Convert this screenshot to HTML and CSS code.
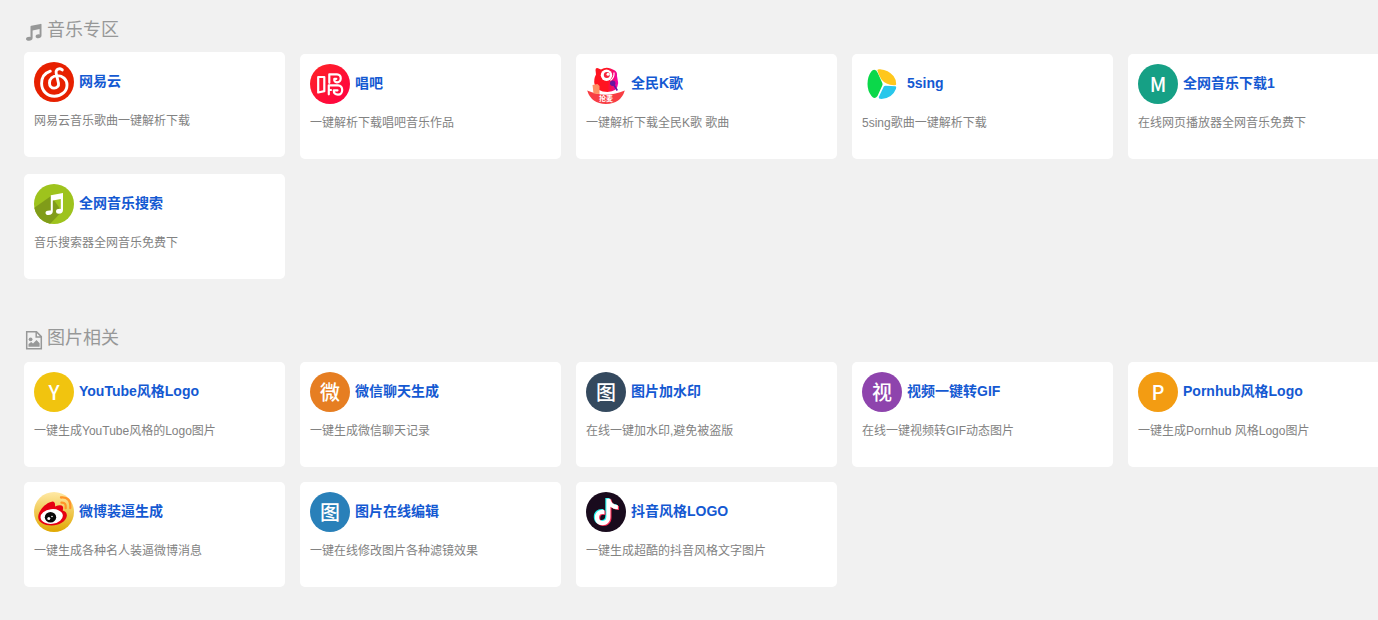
FILE: index.html
```html
<!DOCTYPE html>
<html lang="zh-CN">
<head>
  <meta charset="UTF-8">
  <meta name="viewport" content="width=device-width, initial-scale=1.0">
  <title>音乐专区 - 图片相关</title>
  <link rel="stylesheet" href="styles.css">
</head>
<body>
  <div class="main-content">
    <!-- 音乐专区 -->
    <section class="section">
      <h4 class="section-title">
        <svg class="title-icon" viewBox="0 0 18 20"><path fill="#979898" d="M5.500 4.600Q5.600 3.900 6.300 3.700L15.500 1.900Q16.500 1.700 16.500 2.600V13.600C16.500 15.300 15 16.300 13.200 16.300C11.600 16.300 10.600 15.500 10.600 14.500C10.600 13.200 12 12.300 13.600 12.300Q14.200 12.300 14.600 12.500V6.900L7.600 8.400V16C7.600 17.700 6 18.700 4 18.700C2.200 18.700 1 18 1 16.900C1 15.600 2.600 14.700 4.300 14.700Q5 14.700 5.500 14.900Z"/></svg>
        <span>音乐专区</span>
      </h4>
      <div class="cards">
        <a class="card active">
          <div class="card-head">
            <svg class="logo" viewBox="0 0 40 40">
              <circle cx="20" cy="20" r="20" fill="#e72000"/>
              <path fill="none" stroke="#fff" stroke-width="2.900" stroke-linecap="round" d="M16.300 9.200C10.500 11.200 7.600 16 7.600 21.500C7.600 28.900 13.300 34.200 20.400 34.200C27.700 34.200 33 29.300 33 22.900C33 17.300 28.500 13.600 23.500 13.600C18.700 13.600 15.500 16.800 15.500 20.900C15.500 24.100 17.500 26.100 20.100 26.100C23.100 26.100 25 23.900 24.500 21.200L22.200 11.500C21.400 8.200 23.800 6.500 25.900 6.700Q27.200 6.900 28.300 7.900"/>
            </svg>
            <strong>网易云</strong>
          </div>
          <p>网易云音乐歌曲一键解析下载</p>
        </a>
        <a class="card">
          <div class="card-head">
            <svg class="logo" viewBox="0 0 40 40">
              <defs><linearGradient id="changba" x1="0" y1="0" x2="1" y2="1"><stop offset="0" stop-color="#ff2525"/><stop offset="1" stop-color="#ff0044"/></linearGradient></defs>
              <circle cx="20" cy="20" r="20" fill="url(#changba)"/>
              <g fill="none" stroke="#fff" stroke-width="2.200" stroke-linejoin="round" stroke-linecap="round">
                <path d="M8.200 13H14.300V27.200L8.200 28.500Z"/>
                <path d="M19.300 18.800V10.300H27C32 10.300 32 18.300 27 18.300Q23.800 18 24.300 14.800H26.300"/>
                <path d="M18.800 30.300V21.300H28C33.600 21.300 33.600 30.700 28 30.700Q23.600 30.500 23.800 26.300H27.500M18.800 26H21"/>
              </g>
            </svg>
            <strong>唱吧</strong>
          </div>
          <p>一键解析下载唱吧音乐作品</p>
        </a>
        <a class="card">
          <div class="card-head">
            <svg class="logo" viewBox="0 0 40 40">
              <defs><linearGradient id="kge" x1="0" y1="0" x2="1" y2="0"><stop offset=".55" stop-color="#ff1420"/><stop offset="1" stop-color="#f000b8"/></linearGradient></defs>
              <path fill="url(#kge)" d="M9.500 6Q9.500 3.500 12 4.200L15 5.500Q19.500 2.800 24.500 4.500L28 6Q31.600 7.500 31 12L32.200 19Q31.500 27.800 21.500 28Q11 28 8.500 20Q7.500 15 10 10.500Z"/>
              <circle cx="20.500" cy="11.200" r="5.700" fill="#fff"/>
              <circle cx="20.800" cy="11" r="3" fill="#f5233a"/>
              <circle cx="22" cy="10.300" r="1.500" fill="#fff"/>
              <path d="M28 8.500Q28.500 13.500 24.500 16.500" fill="none" stroke="#fff" stroke-width="1.200"/>
              <path d="M27 19.500L31.300 26.500" stroke="#6814a0" stroke-width="1.700"/>
              <circle cx="26.700" cy="19.200" r="2.700" fill="#6814a0"/>
              <path fill="#f83d43" d="M1.200 26.500Q20 34.800 38.800 26.500Q34.800 39.800 20 40Q5.200 39.800 1.200 26.500Z"/>
              <path fill="#ff9164" d="M6.500 21L11.500 20L13.500 22V30L7.500 29.500Z"/>
              <text class="ribbon" x="20" y="37" text-anchor="middle">抢麦</text>
            </svg>
            <strong>全民K歌</strong>
          </div>
          <p>一键解析下载全民K歌 歌曲</p>
        </a>
        <a class="card">
          <div class="card-head">
            <svg class="logo" viewBox="0 0 40 40">
              <path fill="#0bd84a" d="M12.200 5.800Q14.500 5.800 15.800 9L20.300 19Q20.900 20.400 20.300 21.500L15.500 32Q12.500 36 9.500 32Q5.500 27 5.500 20Q5.500 12.500 9.300 7.600Q10.500 5.800 12.200 5.800Z"/>
              <path fill="#ffc71c" d="M15.300 6.300Q15.500 5 18 5.200Q26.500 6 31.500 12Q34.500 16 34.200 20.300Q34 21.500 32 21.200Q23.500 20.800 19.500 15.500Q16.500 11 15.300 6.300Z"/>
              <path fill="#29c7eb" d="M21.800 22.500Q22.300 21.700 23.500 21.700L33.500 22.300Q34.700 22.500 34 24.700Q30.500 34 19.500 35Q16 35 17 32.500Z"/>
            </svg>
            <strong>5sing</strong>
          </div>
          <p>5sing歌曲一键解析下载</p>
        </a>
        <a class="card">
          <div class="card-head">
            <span class="logo letter teal">M</span>
            <strong>全网音乐下载1</strong>
          </div>
          <p>在线网页播放器全网音乐免费下</p>
        </a>
        <a class="card">
          <div class="card-head">
            <svg class="logo" viewBox="0 0 40 40">
              <defs><clipPath id="round"><circle cx="20" cy="20" r="20"/></clipPath></defs>
              <circle cx="20" cy="20" r="20" fill="#9ec31d"/>
              <path clip-path="url(#round)" fill="#809c19" d="M17 12L28 27.500L14 42H0V24Z"/>
              <path fill="#fff" d="M16.800 11.200L29 9V25.800Q29 29.700 24.800 29.700Q22 29.700 22 27.200Q22.200 24.600 26.800 24.900V15L18.800 16.400V27.200Q18.500 31 14.500 31Q11.500 31 11.500 28.700Q11.700 26.100 16.800 26.500Z"/>
            </svg>
            <strong>全网音乐搜索</strong>
          </div>
          <p>音乐搜索器全网音乐免费下</p>
        </a>
      </div>
    </section>

    <!-- 图片相关 -->
    <section class="section">
      <h4 class="section-title">
        <svg class="title-icon" viewBox="0 0 18 20"><path fill="none" stroke="#979898" stroke-width="1.500" d="M1.700 1.800H11.500L16.300 6.600V18.700H1.700ZM11.200 2V7H16.200"/><path fill="#979898" d="M3.500 16.800V14L6.200 12L8 13.500L11.500 10L14.600 13.200V16.800Z"/><circle cx="5.600" cy="9.300" r="1.900" fill="#979898"/></svg>
        <span>图片相关</span>
      </h4>
      <div class="cards">
        <a class="card">
          <div class="card-head">
            <span class="logo letter yellow">Y</span>
            <strong>YouTube风格Logo</strong>
          </div>
          <p>一键生成YouTube风格的Logo图片</p>
        </a>
        <a class="card">
          <div class="card-head">
            <span class="logo letter carrot">微</span>
            <strong>微信聊天生成</strong>
          </div>
          <p>一键生成微信聊天记录</p>
        </a>
        <a class="card">
          <div class="card-head">
            <span class="logo letter navy">图</span>
            <strong>图片加水印</strong>
          </div>
          <p>在线一键加水印,避免被盗版</p>
        </a>
        <a class="card">
          <div class="card-head">
            <span class="logo letter purple">视</span>
            <strong>视频一键转GIF</strong>
          </div>
          <p>在线一键视频转GIF动态图片</p>
        </a>
        <a class="card">
          <div class="card-head">
            <span class="logo letter orange">P</span>
            <strong>Pornhub风格Logo</strong>
          </div>
          <p>一键生成Pornhub 风格Logo图片</p>
        </a>
        <a class="card">
          <div class="card-head">
            <svg class="logo" viewBox="0 0 40 40">
              <defs><linearGradient id="weibo" x1="0" y1="0" x2="0" y2="1"><stop offset="0" stop-color="#ffe9a5"/><stop offset="1" stop-color="#e0a800"/></linearGradient></defs>
              <circle cx="20" cy="20" r="20" fill="url(#weibo)"/>
              <path fill="#e60012" d="M4.200 25C4.200 18.500 12 10.500 18.500 9.500Q21.500 9.500 21 14.500Q27 12 28.800 14.500Q29.500 16 28.700 18.500Q33.300 20 32.800 24C32 29.500 25 33.500 17.500 33.500C10.500 33.500 4.200 30.500 4.200 25Z"/>
              <ellipse cx="17.700" cy="24.500" rx="11.200" ry="7.300" fill="#fff" transform="rotate(-7 17.700 24.500)"/>
              <ellipse cx="16.500" cy="25.200" rx="5.700" ry="5.200" fill="#090909"/>
              <circle cx="14.800" cy="26.500" r="1.500" fill="#fff"/><circle cx="18" cy="24.500" r=".8" fill="#fff"/>
              <path fill="none" stroke="#ff9529" stroke-width="2.300" stroke-linecap="round" d="M27.500 10.700Q32.500 10.400 31.700 16.200M27 5.500Q37 4.500 36.300 16"/>
            </svg>
            <strong>微博装逼生成</strong>
          </div>
          <p>一键生成各种名人装逼微博消息</p>
        </a>
        <a class="card">
          <div class="card-head">
            <span class="logo letter blue">图</span>
            <strong>图片在线编辑</strong>
          </div>
          <p>一键在线修改图片各种滤镜效果</p>
        </a>
        <a class="card">
          <div class="card-head">
            <svg class="logo" viewBox="0 0 40 40">
              <defs><path id="note" d="M20 6.500H24Q24.500 12 31.500 13V17Q27 17 24 14.500V24.500C24 30 20.500 33 16 33C11.500 33 8.500 30 8.500 25.500C8.500 20 13 17 18 17.800V22Q12.700 21 12.700 25.300Q12.800 28.700 16.200 28.700Q20 28.500 20 24.300Z"/></defs>
              <circle cx="20" cy="20" r="20" fill="#190b1d"/>
              <use href="#note" x="-.7" y="-.6" fill="#25f4ee"/>
              <use href="#note" x="1.500" y="1" fill="#fe2c55"/>
              <use href="#note" x=".4" y=".2" fill="#fff"/>
            </svg>
            <strong>抖音风格LOGO</strong>
          </div>
          <p>一键生成超酷的抖音风格文字图片</p>
        </a>
      </div>
    </section>
  </div>
</body>
</html>
```
FILE: styles.css
```css
* {
  box-sizing: border-box;
}
body {
  margin: 0;
  background: #f1f1f1;
  font-family: "Liberation Sans", "Noto Sans CJK SC", sans-serif;
  font-size: 12px;
  overflow: hidden;
}
.main-content {
  padding: 16px 0 0 24px;
}
.section {
  margin-bottom: 45px;
}
.section-title {
  display: flex;
  height: 38px;
  margin: 0;
  padding-left: 1px;
  gap: 4px;
  color: #979898;
  font-size: 18px;
  font-weight: 400;
  line-height: 28px;
}
.title-icon {
  width: 18px;
  height: 20px;
  margin-top: 6px;
}
.cards {
  display: grid;
  grid-template-columns: repeat(5, 261px);
  grid-auto-rows: 105px;
  gap: 15px;
}
.card {
  padding: 10px;
  border-radius: 5px;
  background: #fff;
  cursor: pointer;
}
.card:hover,
.card.active {
  transform: translateY(-2px);
}
.card-head {
  display: flex;
  gap: 5px;
}
.card strong {
  color: #1459d2;
  font-size: 14px;
  line-height: 38px;
  white-space: nowrap;
}
.card p {
  margin: 11px 0 0;
  color: #828282;
  line-height: 17px;
  white-space: nowrap;
}
.logo {
  flex: none;
  width: 40px;
  height: 40px;
}
.letter {
  border-radius: 50%;
  color: #fff;
  font-family: "Noto Sans CJK SC", sans-serif;
  font-size: 20px;
  font-weight: 500;
  line-height: 39px;
  text-align: center;
}
.ribbon {
  fill: #fff;
  font-size: 7px;
  font-weight: bold;
}
.teal {
  background: #16a085;
}
.yellow {
  background: #f1c40f;
}
.carrot {
  background: #e67e22;
}
.navy {
  background: #34495e;
}
.purple {
  background: #8e44ad;
}
.orange {
  background: #f39c12;
}
.blue {
  background: #2980b9;
}
```
